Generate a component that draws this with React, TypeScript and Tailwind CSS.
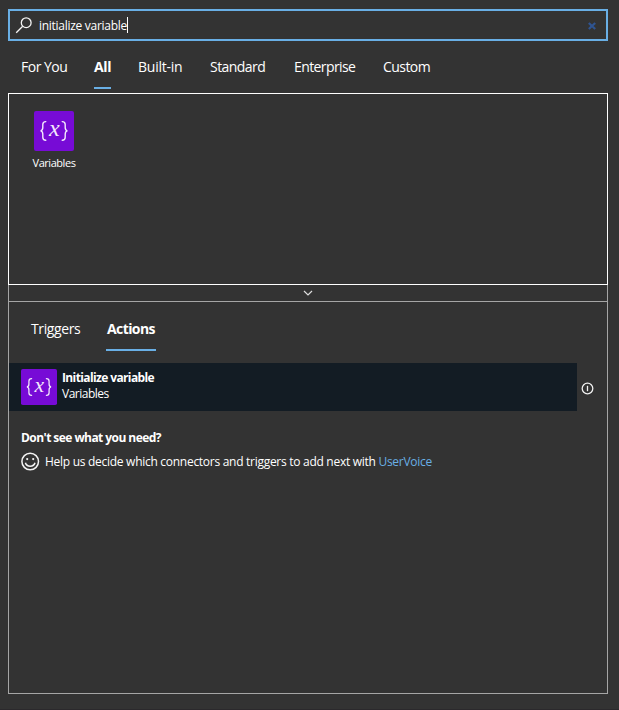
import React from "react";

function VariableIcon({ className }: { className: string }) {
  return (
    <svg viewBox="0 0 40 40" className={className} fill="none" stroke="#f4eafc" strokeLinecap="round">
      <rect width="40" height="40" rx="2" fill="#770bd6" stroke="none" />
      <path d="M11.8 10.6c-2.4 0-3 .9-3 2.9v3.1c0 2-.7 3-2.2 3.3 1.5.3 2.2 1.3 2.2 3.3v3.1c0 2 .6 2.9 3 2.9" strokeWidth="1.4" />
      <path d="M28.2 10.6c2.4 0 3 .9 3 2.9v3.1c0 2 .7 3 2.2 3.3-1.5.3-2.2 1.3-2.2 3.3v3.1c0 2-.6 2.9-3 2.9" strokeWidth="1.4" />
      <text x="20.3" y="25" textAnchor="middle" fill="#f4eafc" stroke="none" className="font-['Liberation_Serif',serif] text-[24px] italic">
        x
      </text>
    </svg>
  );
}

const tabs = [
  { label: "For You", box: "w-[46px] mr-[27px]", text: "tracking-[-0.5px]" },
  { label: "All", box: "w-[17px] mr-[27px]", text: "font-bold tracking-[-0.3px]", active: true },
  { label: "Built-in", box: "w-[45px] mr-[27px]", text: "tracking-[-0.25px]" },
  { label: "Standard", box: "w-[56px] mr-[28px]", text: "tracking-[-0.55px]" },
  { label: "Enterprise", box: "w-[62px] mr-[27px]", text: "tracking-[-0.6px]" },
  { label: "Custom", box: "w-[48px]", text: "tracking-[-0.55px]" },
];

export default function App() {
  return (
    <main className="h-[710px] w-[619px] overflow-hidden border-b border-[#2b292c] bg-[#333333] px-2 pt-[9px] pr-[11px] font-['Open_Sans','Noto_Sans',sans-serif] text-white">
      <div className="flex h-8 items-center border-2 border-[#69afe5] pl-[5px] pr-3">
        <svg width="18" height="18" viewBox="0 0 18 18" fill="none" stroke="#f4f4f4" strokeWidth="1.3">
          <circle cx="11.2" cy="6.7" r="4.9" />
          <path d="M7.7 10.2 1.2 16.7" />
        </svg>
        <span className="ml-[6px] mt-[2px] whitespace-nowrap text-[12px] leading-4 tracking-[-0.28px]">initialize variable</span>
        <span className="h-4 w-px bg-white" />
        <svg width="8" height="8" viewBox="0 0 8 8" className="ml-auto mt-[2px] -mr-[2px]" stroke="#2f5491" strokeWidth="2.2">
          <path d="m.8 1 6.4 6M7.2 1 .8 7" />
        </svg>
      </div>

      <nav className="flex h-12 pl-[13px] text-[14px] leading-5">
        {tabs.map((tab) => (
          <div key={tab.label} className={`relative h-12 whitespace-nowrap pt-4 ${tab.box} ${tab.text}`}>
            {tab.label}
            {tab.active && <span className="absolute bottom-0 left-0 h-[2px] w-[17px] bg-[#69afe5]" />}
          </div>
        ))}
      </nav>

      <section className="mt-1 h-48 border border-white pl-[15px] pt-[17px]">
        <div className="flex w-[60px] flex-col items-center">
          <VariableIcon className="size-10" />
          <span className="mt-1 whitespace-nowrap text-[11px] leading-4 tracking-[-0.45px]">Variables</span>
        </div>
      </section>

      <section className="h-[409px] border border-t-0 border-[#a6a6a6]">
        <div className="flex h-[17px] items-center justify-center border-b border-[#a6a6a6]">
          <svg width="10" height="6" viewBox="0 0 10 6" fill="none" stroke="#dddddd" strokeWidth="1.2">
            <path d="m1 1 4 4 4-4" />
          </svg>
        </div>
        <div className="flex h-[49px] pl-[22px] pt-[17px] text-[14px] leading-5">
          <span className="w-[75px] whitespace-nowrap tracking-[-0.4px]">Triggers</span>
          <div className="w-[50px] border-b-2 border-[#69afe5] pl-[1px] font-bold tracking-[-0.6px]">Actions</div>
        </div>
        <div className="mt-3 flex h-12 items-center">
          <div className="flex h-12 w-[568px] items-center bg-[#131c24] pl-3 text-[12px] leading-4">
            <VariableIcon className="size-9" />
            <div className="ml-[5px] -mt-[2px] whitespace-nowrap">
              <div className="font-bold tracking-[-0.62px]">Initialize variable</div>
              <div className="tracking-[-0.5px]">Variables</div>
            </div>
          </div>
          <svg width="13" height="13" viewBox="0 0 13 13" className="ml-1 mt-[3px]" fill="none" stroke="#f0f0f0" strokeWidth="1.3">
            <circle cx="6.5" cy="6.5" r="5.3" />
            <path d="M6.5 3.8v5.4" />
          </svg>
        </div>
        <div className="pl-3 pt-[19px] text-[12px] leading-4">
          <div className="font-bold tracking-[-0.56px]">Don't see what you need?</div>
          <div className="mt-[6px] flex items-center">
            <svg width="19" height="19" viewBox="0 0 19 19" fill="none" stroke="#f4f4f4" strokeWidth="1.5">
              <circle cx="9.2" cy="9.5" r="8.3" />
              <path d="M4.4 10.8c1.2 4.5 8.4 4.5 9.6 0" />
              <circle cx="6.2" cy="7.1" r="1.1" fill="#f4f4f4" stroke="none" />
              <circle cx="12.2" cy="7.1" r="1.1" fill="#f4f4f4" stroke="none" />
            </svg>
            <span className="ml-[5px] whitespace-nowrap tracking-[-0.28px]">
              Help us decide which connectors and triggers to add next with <span className="text-[#69afe5]">UserVoice</span>
            </span>
          </div>
        </div>
      </section>
    </main>
  );
}
